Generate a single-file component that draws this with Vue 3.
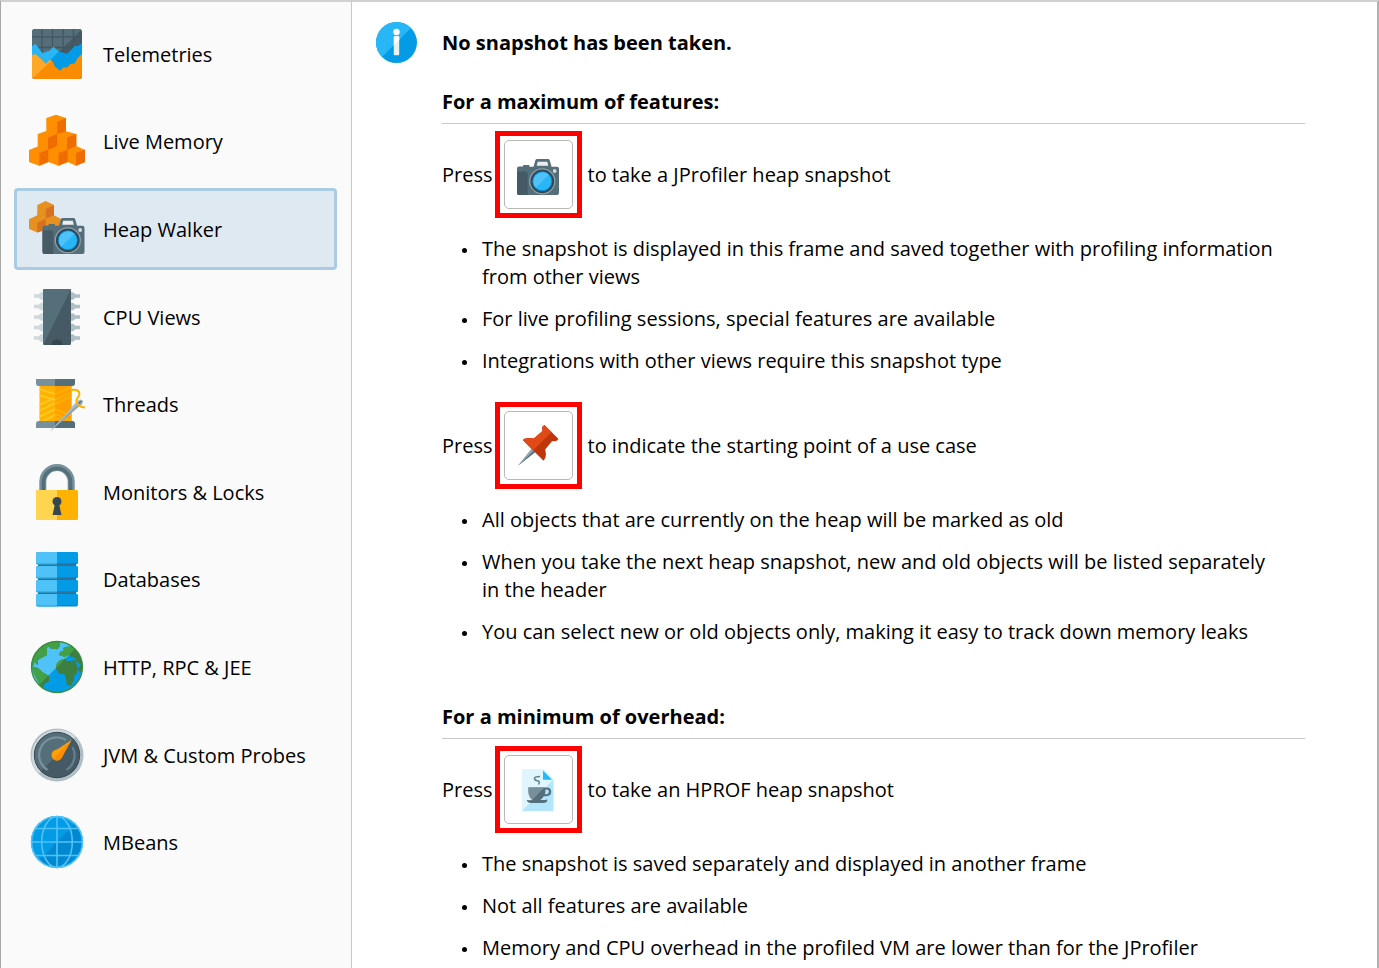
<template>
  <div class="profiler">
    <svg class="symbols" aria-hidden="true">
      <defs>
        <clipPath id="upperLeft"><path d="M0 56V0h56z" /></clipPath>
        <clipPath id="globeClip"><circle cx="28" cy="28" r="25.5" /></clipPath>
        <clipPath id="telemetryClip"><rect x="3" y="3" width="50" height="50" rx="3" /></clipPath>
        <clipPath id="spoolClip"><path d="M10.5 10h32v35h-32z" /></clipPath>
      </defs>

      <symbol id="telemetries" viewBox="0 0 56 56">
        <g clip-path="url(#telemetryClip)">
          <path fill="#455a64" d="M3 3h50v50H3z" />
          <path fill="#546e7a" d="M3 3h50L3 53z" />
          <path stroke="#43565f" stroke-width="1.3" fill="none" d="M13 3v26M23.5 3v26M34 3v26M44.5 3v26M3 10.8h50M3 21.5h50" />
          <path fill="#039be5" d="M3 20l3.7-2 6.6 9.3 4.4-1.6 3-1 3.6-4 6 5 3.4.6 4 1.7L41 25l5-5.3 2.3.6L53 17.500V53H3z" />
          <path fill="#29b6f6" d="M3 20l3.7-2 6.6 9.3 4.4-1.6 3-1 3.6-4 5.5 4.7L3 52z" />
          <path fill="#fb8c00" d="M3 29l3.7-.7 6 5.4 4.3 4.3 4-4.3 2.7 2 2.3 5 5 4 4-4 2.7 1.3 3.3-3.7 5-1 2.3-5L53 28v25H3z" />
          <path fill="#ffa726" d="M3 29l3.7-.7 6 5.4 4.3 4.3 4-4.3 1.3 1L3 53z" />
        </g>
      </symbol>

      <symbol id="memory" viewBox="0 0 56 56">
        <path fill="#ff8f00" d="M27 1.7L37 5v13.3L47.3 21v12L56 37v12l-9 3.7L38.7 49l-9.2 3.7L19.3 49l-9 3.7L0 49V37l8.7-3.5V21l8.6-3V5z" />
        <path fill="#ef6c00" d="M28 9l9-4v13.3L28 21zM19 24.5l9-3.5v12l-9 4zM38 24.5l9.3-3.5v12L38 37zM10.3 40l9-3.5V49l-9 3.7zM29.5 40l9.2-3.5V49l-9.2 3.7zM47 40l9-3.5V49l-9 3.7z" />
      </symbol>

      <symbol id="camera" viewBox="0 0 42 36">
        <path fill="#546e7a" d="M6 7.5V6.500Q6 6 7 6h5q.5 0 .5 1v.7h4L18.500 1Q19 0 20 0h11q1.200 0 1.600 1l2 6.700H40q2 0 2 2V34q0 2-2 2H2q-2 0-2-2V9.500q0-2 2-2z" />
        <path fill="#455a64" d="M0 12.500h8q2.700 0 2.700 3V36H2q-2 0-2-2z" />
        <path fill="#eceff1" d="M20.700 2.700h9.600l1 4H19.700z" />
        <circle cx="25.3" cy="22.3" r="13.3" fill="#546e7a" />
        <circle cx="25.3" cy="22.3" r="12.5" fill="#37474f" stroke="#90a4ae" stroke-width="1.2" />
        <circle cx="25.3" cy="22.3" r="9.5" fill="#29b6f6" stroke="#0288d1" stroke-width="1" />
        <path fill="#4fc3f7" d="M18.800 28.800a9.200 9.200 0 0 1 13-13z" />
        <circle cx="37.7" cy="12" r="1.9" fill="#cfd8dc" />
      </symbol>

      <symbol id="heap" viewBox="0 0 56 56">
        <path fill="#e5901f" d="M16.700 0L25 4v10.300L34 19v10H14.500l-6.200 2.500L0 28V18.300l8.300-4V4z" />
        <path fill="#d6711f" d="M16.700 8L25 4.300v10l-8.300 3.500zM8.300 21.700l8.400-3.700v11l-8.400 2.500z" />
        <use href="#camera" x="13" y="17" width="43" height="36" />
      </symbol>

      <symbol id="cpu" viewBox="0 0 56 56">
        <g v-for="y in [7, 17.5, 28, 38.5, 49]" :key="y" :transform="`translate(0 ${y})`">
          <path fill="#cfd8dc" d="M5-1.800h4.500L12-3.700h2v7.400h-2L9.500 1.800H5z" />
          <path fill="#b0bec5" d="M51-1.800h-4.500L44-3.700h-2v7.400h2l2.500-1.900H51z" />
        </g>
        <rect x="14" width="28" height="56" rx="1.5" fill="#455a64" />
        <path fill="#546e7a" d="M15.500 0H42L14.500 55.500 14 54V1.500Q14 0 15.500 0z" />
        <path fill="#37474f" d="M22.500 56a5.500 5.500 0 0 1 11 0z" />
      </symbol>

      <symbol id="threads" viewBox="0 0 56 56">
        <path fill="#ffb300" d="M10.500 10h32v35h-32z" />
        <path fill="#ffa000" d="M26 10h16.500v35H26z" />
        <g clip-path="url(#spoolClip)" fill="none" stroke-width="1.8">
          <path stroke="#ffca28" d="M10 13l16 5M10 19l16 5M10 29l16-7M10 35l16-8M10 41l16-8M12 46l14-7" />
          <path stroke="#ffb300" d="M26 18l17-7M26 24l17-8M26 28l17-8M26 33l17 7M26 38l17 7M26 42l10 3" />
        </g>
        <path fill="#78909c" d="M7 3h19v7H9.500Q7 10 7 7zM7 52h19v-7H9.500Q7 45 7 48z" />
        <path fill="#546e7a" d="M26 3h20v4q0 3-2.500 3H26zM26 52h20v-4q0-3-2.500-3H26z" />
        <path fill="none" stroke="#ffb300" stroke-width="2" d="M42.500 14c5-1 8 1 8 4s-4 4-3 8" />
        <path fill="#90a4ae" d="M21 55.500l27-30q3-2.500 5-1.500t-.5 4.500z" />
        <path fill="#b0bec5" d="M21 55.500l27-30q3-2.500 5-1.500z" />
        <path stroke="#546e7a" stroke-width="1.2" d="M49 28l3-3" />
        <path fill="none" stroke="#ffb300" stroke-width="2" d="M47.500 24c0 4 3 7 8.500 7.500" />
      </symbol>

      <symbol id="lock" viewBox="0 0 56 56">
        <path fill="none" stroke="#78909c" stroke-width="7" d="M13.800 27V17.800a14.200 14.200 0 0 1 28.400 0V27" />
        <path fill="none" stroke="#546e7a" stroke-width="3.5" d="M14.500 27V18a13.500 13.500 0 0 1 27 0v9" />
        <rect x="7" y="26" width="42" height="30" rx="1.5" fill="#ffb300" />
        <path fill="#ffd54f" d="M8.500 26H28v30H8.500Q7 56 7 54.500v-27Q7 26 8.500 26z" />
        <circle cx="28" cy="37.5" r="4.5" fill="#37474f" />
        <path fill="#37474f" d="M26.200 39h3.600l2.700 12h-9z" />
      </symbol>

      <symbol id="database" viewBox="0 0 56 56">
        <path fill="#616161" d="M9 12h38v32H9z" />
        <g v-for="y in [1, 15, 29, 43]" :key="y" :transform="`translate(0 ${y})`">
          <rect x="7" width="42" height="12.6" rx="2" fill="#0288d1" />
          <path fill="#039be5" d="M28 0h19q2 0 2 2v9H28z" />
          <path fill="#29b6f6" d="M7 9h21v3.600H9q-2 0-2-2z" />
          <path fill="#4fc3f7" d="M9 0h19v11H7V2q0-2 2-2z" />
        </g>
      </symbol>

      <symbol id="globe" viewBox="0 0 56 56">
        <g clip-path="url(#globeClip)">
          <path fill="#039be5" d="M0 0h56v56H0z" />
          <path fill="#4fc3f7" d="M0 56V0h56z" />
          <path fill="#3c7f40" :d="land" />
          <g clip-path="url(#upperLeft)">
            <path fill="#43a047" :d="land" />
          </g>
        </g>
        <circle cx="28" cy="28" r="25.5" fill="none" stroke="#388e3c" stroke-width="1.3" />
      </symbol>

      <symbol id="gauge" viewBox="0 0 56 56">
        <circle cx="28" cy="28" r="26.5" fill="#b0bec5" />
        <path fill="#cfd8dc" d="M9.300 46.700A26.500 26.500 0 0 1 46.700 9.300z" />
        <circle cx="28" cy="28" r="22.7" fill="#455a64" stroke="#37474f" stroke-width="1" />
        <path fill="#546e7a" d="M12.300 43.700A22.200 22.200 0 0 1 43.700 12.300z" />
        <path fill="none" stroke="#78909c" stroke-width="2.4" d="M18.500 43A17.500 17.500 0 0 1 37 13" />
        <path fill="none" stroke="#607d8b" stroke-width="2.4" d="M43.500 20A17.500 17.500 0 0 1 37.500 43" />
        <path fill="#ffa000" d="M42.500 13L32.500 31 25 24.500z" />
        <circle cx="28" cy="28" r="5.5" fill="#ffa000" />
        <path fill="#fb8c00" d="M42.500 13l-9.300 16.500a5.500 5.500 0 0 1-9 2.500z" />
      </symbol>

      <symbol id="mbeans" viewBox="0 0 56 56">
        <circle cx="28" cy="28" r="26" fill="#0288d1" />
        <path fill="#039be5" d="M9.600 46.400A26 26 0 0 1 46.400 9.600z" />
        <g fill="none" stroke="#4fc3f7" stroke-width="1.6">
          <circle cx="28" cy="28" r="25.5" />
          <ellipse cx="28" cy="28" rx="15.3" ry="25.5" />
          <path d="M28 2v52M2 28h52M6 14.500h44M6 41.500h44" />
        </g>
      </symbol>

      <symbol id="info" viewBox="0 0 41 41">
        <circle cx="20.5" cy="20.5" r="20.5" fill="#039be5" />
        <path fill="#29b6f6" d="M6 35A20.500 20.500 0 0 1 35 6z" />
        <circle cx="20.5" cy="10" r="3.2" fill="#fff" />
        <rect x="17.8" y="14.3" width="5.4" height="19" rx="1" fill="#eceff1" />
        <path fill="#fff" d="M18.800 14.300h3.400q1 0 1 1V18l-5.400 5.400v-8q0-1.100 1-1.100z" />
      </symbol>

      <symbol id="snapshot" viewBox="0 0 42 42">
        <use href="#camera" y="5" width="42" height="36" />
      </symbol>

      <symbol id="pin" viewBox="0 0 42 42">
        <path fill="#546e7a" d="M.8 41l17.700-14-3-3z" />
        <path fill="#90a4ae" d="M.8 41L17 25.500 15 23z" />
        <path fill="#bf360c" d="M5.800 15q1.500-1.500 4-1.800 4-.5 7 .3L25.500 6q-1-3 0-4.500L27.500 0l14 14-1.700 1.800q-2 .7-4.600.2l-7 8.500q1.200 4 .3 8L26.500 35.800z" />
        <path fill="#e04a16" d="M5.800 15q1.500-1.500 4-1.800 4-.5 7 .3L25.500 6q-1-3 0-4.500L27.500 0l7 7L16 25.500z" />
      </symbol>

      <symbol id="hprof" viewBox="0 0 42 42">
        <path fill="#b3e5fc" d="M5 0h21.500l10 10.500V42H5z" />
        <path fill="#e1f5fe" d="M5 0h21.500l10 10.500L5 42z" />
        <path fill="#29b6f6" d="M26 1.500l9 9.300h-9z" />
        <path fill="#546e7a" d="M11.500 18.500h18q4.700 0 4.700 4.300t-5 4.400h-2.500q-1 2.500-3.500 3.800 4 .2 7-.5.800 3.500-5 3.500H14q-3.500 0-4.300-3 3 .3 6 0-4.200-3-4.200-9zM28.500 20.500l-.5 4.700h1.500q2.500 0 2.500-2.400t-2.300-2.300z" />
        <path fill="#78909c" d="M11.500 18.500h16L15 31q-3.500-3-3.500-9z" />
        <path fill="none" stroke="#607d8b" stroke-width="1.5" d="M23 7.500q-5.500 0-5.500 2t3 2.200 1 3.800" />
      </symbol>
    </svg>

    <nav class="sidebar">
      <button
        v-for="view in views"
        :key="view.icon"
        type="button"
        class="view"
        :class="{ selected: view.icon === selected }"
        @click="selected = view.icon"
      >
        <svg class="view-icon" aria-hidden="true"><use :href="'#' + view.icon" /></svg>
        <span class="view-label">{{ view.label }}</span>
      </button>
    </nav>

    <main class="content">
      <svg class="info-icon" aria-hidden="true"><use href="#info" /></svg>

      <div class="help">
        <h1>No snapshot has been taken.</h1>

        <section v-for="section in sections" :key="section.title">
          <h2>{{ section.title }}</h2>

          <div v-for="action in section.actions" :key="action.icon" class="action">
            <div class="press">
              <span>Press</span>
              <span class="highlight">
                <button type="button" class="tool" :aria-label="action.text">
                  <svg class="tool-icon" aria-hidden="true"><use :href="'#' + action.icon" /></svg>
                </button>
              </span>
              <span>{{ action.text }}</span>
            </div>

            <ul>
              <li v-for="note in action.notes" :key="note">{{ note }}</li>
            </ul>
          </div>
        </section>
      </div>
    </main>
  </div>
</template>

<script setup>
import { ref } from 'vue'

const selected = ref('heap')

const views = [
  { icon: 'telemetries', label: 'Telemetries' },
  { icon: 'memory', label: 'Live Memory' },
  { icon: 'heap', label: 'Heap Walker' },
  { icon: 'cpu', label: 'CPU Views' },
  { icon: 'threads', label: 'Threads' },
  { icon: 'lock', label: 'Monitors & Locks' },
  { icon: 'database', label: 'Databases' },
  { icon: 'globe', label: 'HTTP, RPC & JEE' },
  { icon: 'gauge', label: 'JVM & Custom Probes' },
  { icon: 'mbeans', label: 'MBeans' }
]

// North America, South America, Europe with Asia, Africa
const land =
  'M2 28L0 14 14 0H31L31 7 28.500 10.300 22 9.700 20 7.500 18 8.500 18 16 14 18 9 21 8.700 26 5 23 4 28z' +
  'M3 28.500L7 28 10.500 30.300 13 33 20 37 20 42 15 45.300 13.500 51 8 48 10 44 5 35z' +
  'M30 16L31 13 35 11.500 34 9 39 7.500 46 8 54 20V29L51 34 49 30 52 26 47 22 46 19 42 18 40 15.500 36 18z' +
  'M27 30.300L27.500 25 30.500 21.500 36 19.500 38 22 42 22 46 21 49 30 48 34 45 37 45 41 42 46.500 38 46 36.300 37 35 35 30 34.500z'

const sections = [
  {
    title: 'For a maximum of features:',
    actions: [
      {
        icon: 'snapshot',
        text: 'to take a JProfiler heap snapshot',
        notes: [
          'The snapshot is displayed in this frame and saved together with profiling information from other views',
          'For live profiling sessions, special features are available',
          'Integrations with other views require this snapshot type'
        ]
      },
      {
        icon: 'pin',
        text: 'to indicate the starting point of a use case',
        notes: [
          'All objects that are currently on the heap will be marked as old',
          'When you take the next heap snapshot, new and old objects will be listed separately in the header',
          'You can select new or old objects only, making it easy to track down memory leaks'
        ]
      }
    ]
  },
  {
    title: 'For a minimum of overhead:',
    actions: [
      {
        icon: 'hprof',
        text: 'to take an HPROF heap snapshot',
        notes: [
          'The snapshot is saved separately and displayed in another frame',
          'Not all features are available',
          'Memory and CPU overhead in the profiled VM are lower than for the JProfiler'
        ]
      }
    ]
  }
]
</script>

<style>
body {
  margin: 0;
}
</style>

<style scoped>
.profiler {
  display: flex;
  box-sizing: border-box;
  height: 100vh;
  overflow: hidden;
  border-top: 2px solid #d0d0d0;
  border-left: 1px solid #a8a8a8;
  border-right: 2px solid #b0b0b0;
  background: #fff;
  color: #000;
  font-family: "Open Sans", "Noto Sans", sans-serif;
  font-size: 20px;
  line-height: 28px;
}

.symbols {
  position: absolute;
  width: 0;
  height: 0;
}

.sidebar {
  display: flex;
  flex-direction: column;
  flex: none;
  gap: 6px;
  box-sizing: border-box;
  width: 351px;
  padding: 11px 14px 85px 13px;
  border-right: 1px solid #c8c8c8;
  background: #fafafa;
}

.view {
  display: flex;
  flex: 1;
  align-items: center;
  gap: 18px;
  padding: 0 12px;
  border: 3px solid transparent;
  border-radius: 4px;
  background: none;
  color: inherit;
  font: inherit;
  text-align: left;
}

.view.selected {
  border-color: #a9cbe4;
  background: #dfe9f2;
}

.view-icon {
  flex: none;
  width: 56px;
  height: 56px;
}

.view-label {
  padding-top: 2px;
}

.content {
  display: flex;
  flex: 1;
  align-items: flex-start;
  gap: 25px;
  padding: 20px 72px 0 24px;
}

.info-icon {
  flex: none;
  width: 41px;
  height: 41px;
}

.help {
  flex: 1;
  padding-top: 7px;
}

h1,
h2 {
  margin: 0;
  font-size: 20px;
  font-weight: 700;
}

h1 {
  margin-bottom: 31px;
}

h2 {
  margin-bottom: 7px;
  padding-bottom: 7px;
  border-bottom: 1px solid #c8c8c8;
}

section {
  margin-bottom: 57px;
}

.action + .action {
  margin-top: 27px;
}

.press {
  display: flex;
  align-items: center;
  gap: 2px;
}

.highlight {
  margin-right: 4px;
  padding: 4px;
  border: 5px solid #f00;
}

.tool {
  display: flex;
  align-items: center;
  justify-content: center;
  box-sizing: border-box;
  width: 69px;
  height: 69px;
  padding: 0;
  border: 1px solid #b8b8b8;
  border-radius: 5px;
  background: #fff;
}

.tool-icon {
  width: 42px;
  height: 42px;
}

ul {
  display: flex;
  flex-direction: column;
  gap: 14px;
  margin: 17px 0 0;
  padding: 0 24px 0 20px;
  list-style: none;
}

li {
  display: flex;
  gap: 15px;
}

li::before {
  content: "";
  flex: none;
  width: 5px;
  height: 5px;
  margin-top: 13px;
  border-radius: 50%;
  background: #000;
}
</style>
